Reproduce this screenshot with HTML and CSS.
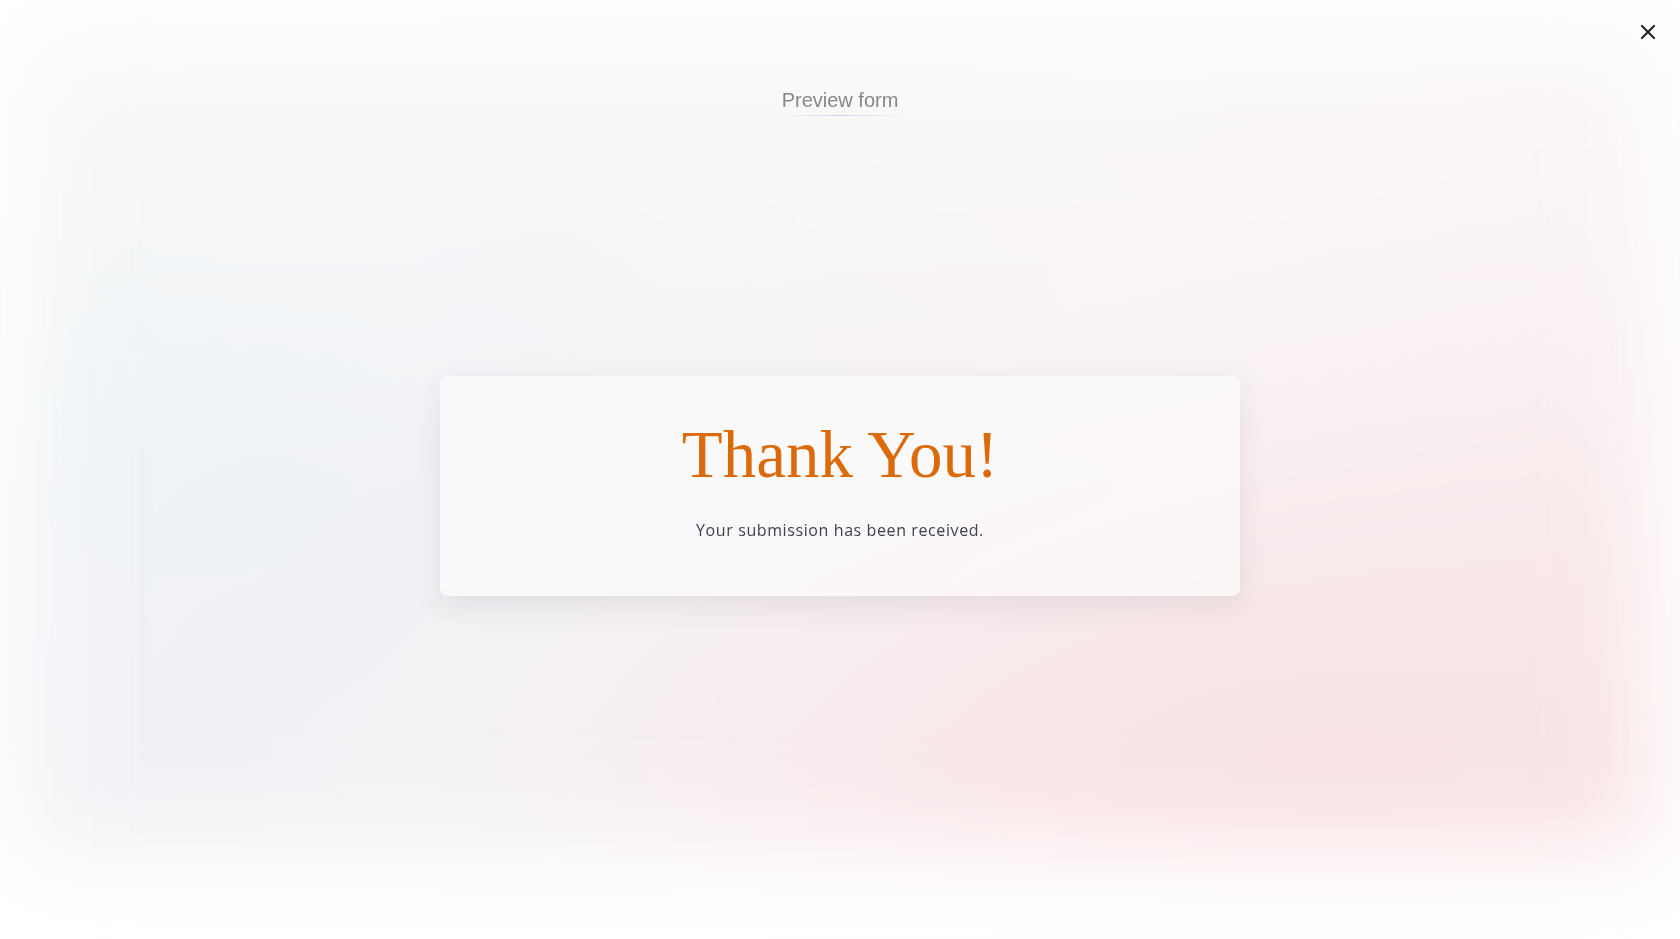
FILE: index.html
```html
<!DOCTYPE html>
<html lang="en">
<head>
<meta charset="utf-8">
<title>Preview form</title>
<link rel="stylesheet" href="styles.css">
</head>
<body>
<div class="backdrop" aria-hidden="true"></div>
<button class="close" aria-label="Close">
  <svg width="14" height="14" viewBox="0 0 14 14"><path d="M1 1L13 13M13 1L1 13" stroke="#1f2029" stroke-width="2" stroke-linecap="square" fill="none"/></svg>
</button>
<div class="page">
  <header class="header">
    <span class="title">Preview form</span>
  </header>
  <main class="main">
    <section class="card">
      <h1 class="thanks">Thank You!</h1>
      <p class="message">Your submission has been received.</p>
    </section>
  </main>
</div>
</body>
</html>
```
FILE: styles.css
```css
html, body {
  margin: 0;
  padding: 0;
  height: 100%;
}
body {
  background: #ffffff;
  font-family: "Liberation Sans", Arial, sans-serif;
  overflow: hidden;
}
.backdrop {
  position: fixed;
  top: 40px;
  left: 30px;
  right: 30px;
  bottom: 90px;
  background:
    linear-gradient(180deg, rgba(252,251,251,0.75) 0%, rgba(252,251,251,0.3) 35%, rgba(252,251,251,0) 55%),
    radial-gradient(ellipse 50% 45% at 80% 95%, #f9e1e3 0%, rgba(249,225,227,0) 100%),
    radial-gradient(ellipse 35% 50% at 8% 35%, #edf2f5 0%, rgba(237,242,245,0) 100%),
    linear-gradient(120deg, #f0f3f6 0%, #f1f1f5 30%, #f7f0f2 58%, #f9e9ea 100%);
  filter: blur(45px);
  z-index: 0;
}
.close {
  position: absolute;
  top: 16px;
  right: 16px;
  width: 32px;
  height: 32px;
  display: flex;
  align-items: center;
  justify-content: center;
  border: 0;
  background: transparent;
  padding: 0;
  z-index: 2;
}
.page {
  position: relative;
  z-index: 1;
  height: 100%;
  display: flex;
  flex-direction: column;
}
.header {
  display: flex;
  justify-content: center;
  padding-top: 89px;
}
.title {
  font-size: 20px;
  line-height: 23px;
  color: #86878c;
  padding: 0 6px 4px;
  background: linear-gradient(90deg, rgba(200,206,220,0) 0%, #cdd3df 50%, rgba(200,206,220,0) 100%) bottom / 100% 1px no-repeat;
}
.main {
  flex: 1;
  display: flex;
  align-items: center;
  justify-content: center;
  padding-bottom: 83px;
}
.card {
  width: 800px;
  box-sizing: border-box;
  padding: 38px 40px 54px;
  background: rgba(255,255,255,0.55);
  border-radius: 8px;
  box-shadow: 0 10px 28px rgba(60,40,50,0.09);
  text-align: center;
}
.thanks {
  margin: 0;
  font-family: "Liberation Serif", "Times New Roman", serif;
  font-weight: 400;
  font-size: 67px;
  line-height: 1.2;
  color: #db6a0b;
}
.message {
  margin: 24px 0 0;
  font-family: "Open Sans", "Noto Sans", sans-serif;
  font-size: 16px;
  line-height: 24px;
  color: #3f404b;
  letter-spacing: 0.6px;
}
```
